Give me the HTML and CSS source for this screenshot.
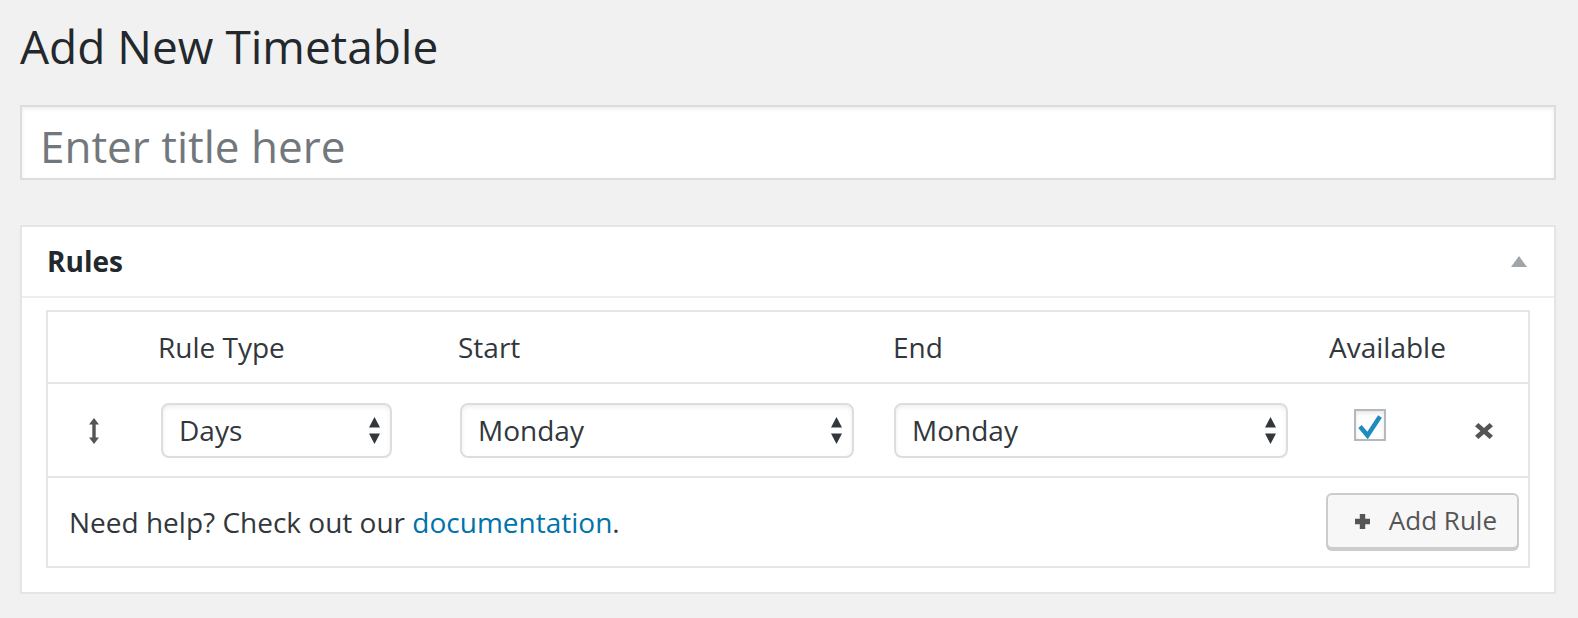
FILE: index.html
```html
<!DOCTYPE html>
<html lang="en">
<head>
<meta charset="utf-8">
<title>Add New Timetable</title>
<link rel="stylesheet" href="styles.css">
</head>
<body>
<div class="wrap">
  <h1 class="page-title">Add New Timetable</h1>
  <input class="title-input" type="text" placeholder="Enter title here">

  <div class="postbox">
    <div class="postbox-header">
      <h2 class="hndle">Rules</h2>
      <svg class="toggle" width="16" height="11" viewBox="0 0 16 11"><polygon points="8,0 16,11 0,11" fill="#a0a5aa"/></svg>
    </div>
    <div class="inside">
      <div class="rules">
        <div class="grid head">
          <div class="cell"></div>
          <div class="cell th">Rule Type</div>
          <div class="cell th">Start</div>
          <div class="cell th">End</div>
          <div class="cell th">Available</div>
          <div class="cell"></div>
        </div>
        <div class="grid row">
          <div class="cell c-sort">
            <svg width="10" height="26" viewBox="0 0 10 26"><path d="M5 0 L10 6.5 L6.7 6.5 L6.7 19.5 L10 19.5 L5 26 L0 19.5 L3.3 19.5 L3.3 6.5 L0 6.5 Z" fill="#555"/></svg>
          </div>
          <div class="cell">
            <div class="select s-type"><span>Days</span><svg class="updown" width="11" height="27" viewBox="0 0 11 27"><polygon points="5.5,0 11,10.5 0,10.5" fill="#32373c"/><polygon points="0,16.5 11,16.5 5.5,27" fill="#32373c"/></svg></div>
          </div>
          <div class="cell">
            <div class="select s-day"><span>Monday</span><svg class="updown" width="11" height="27" viewBox="0 0 11 27"><polygon points="5.5,0 11,10.5 0,10.5" fill="#32373c"/><polygon points="0,16.5 11,16.5 5.5,27" fill="#32373c"/></svg></div>
          </div>
          <div class="cell">
            <div class="select s-day s-end"><span>Monday</span><svg class="updown" width="11" height="27" viewBox="0 0 11 27"><polygon points="5.5,0 11,10.5 0,10.5" fill="#32373c"/><polygon points="0,16.5 11,16.5 5.5,27" fill="#32373c"/></svg></div>
          </div>
          <div class="cell c-avail">
            <span class="checkbox"><svg width="28" height="28" viewBox="0 0 28 28"><polyline points="4,15.5 11.5,24.5 24,5.5" fill="none" stroke="#1e8cbe" stroke-width="4.5"/></svg></span>
          </div>
          <div class="cell c-remove">
            <svg width="18" height="16" viewBox="0 0 18 16"><polygon points="0,3.2 3.4,0 9,5 14.6,0 18,3.2 12.6,8 18,12.8 14.6,16 9,11 3.4,16 0,12.8 5.4,8" fill="#555"/></svg>
          </div>
        </div>
        <div class="foot">
          <p class="help">Need help? Check out our <a href="#">documentation</a>.</p>
          <button class="button" type="button"><svg width="15" height="15" viewBox="0 0 15 15"><path d="M4.8 0 H10.2 V4.8 H15 V10.2 H10.2 V15 H4.8 V10.2 H0 V4.8 H4.8 Z" fill="#555"/></svg><span>Add Rule</span></button>
        </div>
      </div>
    </div>
  </div>
</div>
</body>
</html>
```
FILE: styles.css
```css
html, body {
  margin: 0;
  padding: 0;
}
body {
  background: #f1f1f1;
  font-family: "Open Sans", "Noto Sans", sans-serif;
  color: #32373c;
}
.wrap {
  padding: 16px 22px 0 20px;
}
.page-title {
  margin: 0;
  font-size: 46px;
  line-height: 60px;
  font-weight: 400;
  color: #23282d;
}
.title-input {
  display: block;
  width: 100%;
  height: 75px;
  margin: 29px 0 0;
  box-sizing: border-box;
  border: 2px solid #ddd;
  padding: 6px 18px 0;
  font-family: "Open Sans", sans-serif;
  font-size: 44px;
  color: #32373c;
  background: #fff;
  box-shadow: inset 0 2px 4px rgba(0,0,0,.07);
  outline: none;
}
.title-input::placeholder {
  color: #72777c;
  opacity: 1;
}
.postbox {
  margin-top: 45px;
  background: #fff;
  border: 2px solid #e5e5e5;
  box-shadow: 0 2px 2px rgba(0,0,0,.04);
}
.postbox-header {
  display: flex;
  align-items: center;
  justify-content: space-between;
  padding: 15px 27px 15px 25px;
  border-bottom: 2px solid #eee;
}
.hndle {
  margin: 0;
  font-size: 28px;
  line-height: 39.2px;
  font-weight: 700;
  color: #23282d;
}
.toggle {
  display: block;
}
.inside {
  padding: 12px 24px 24px;
}
.rules {
  border: 2px solid #e5e5e5;
}
.grid {
  display: grid;
  grid-template-columns: 108px 300px 435px 436px 121px 80px;
}
.head {
  height: 70px;
  border-bottom: 2px solid #e5e5e5;
}
.th {
  padding-left: 2px;
  font-size: 28px;
  line-height: 70px;
  color: #32373c;
}
.row {
  height: 92px;
  border-bottom: 2px solid #e5e5e5;
}
.row .cell {
  display: flex;
  align-items: center;
}
.c-sort {
  padding-left: 41px;
}
.c-sort svg, .c-remove svg {
  display: block;
  margin-top: 1px;
}
.select {
  box-sizing: border-box;
  height: 55px;
  margin-left: 4px;
  display: flex;
  align-items: center;
  padding: 0 10px 0 16px;
  border: 2px solid #ddd;
  border-radius: 8px;
  background: #fff;
  box-shadow: inset 0 2px 4px rgba(0,0,0,.07);
  font-size: 28px;
  color: #32373c;
}
.select span {
  flex: 1;
}
.updown {
  display: block;
}
.s-type {
  width: 231px;
  margin-left: 5px;
}
.s-day {
  width: 394px;
}
.s-end {
  margin-left: 3px;
}
.c-avail {
  padding-left: 27px;
}
.row .c-avail {
  align-items: flex-start;
}
.checkbox {
  display: block;
  margin-top: 25px;
  width: 32px;
  height: 32px;
  box-sizing: border-box;
  border: 2px solid #b4b9be;
  background: #fff;
  box-shadow: inset 0 2px 4px rgba(0,0,0,.1);
}
.checkbox svg {
  display: block;
}
.c-remove {
  padding-left: 27px;
}
.foot {
  height: 88px;
  display: flex;
  align-items: center;
  justify-content: space-between;
  padding: 0 9px 0 21px;
}
.help {
  margin: 0;
  font-size: 28px;
  line-height: 39.2px;
  color: #32373c;
}
.help a {
  color: #0073aa;
  text-decoration: none;
}
.button {
  display: flex;
  align-items: center;
  box-sizing: border-box;
  height: 56px;
  margin-top: -2px;
  padding: 0 20px 2px 27px;
  border: 2px solid #ccc;
  border-radius: 6px;
  background: #f7f7f7;
  box-shadow: 0 2px 0 #ccc;
  font-family: "Open Sans", sans-serif;
  font-size: 26px;
  color: #555;
}
.button svg {
  display: block;
  margin-right: 19px;
  margin-top: 2px;
}
```
